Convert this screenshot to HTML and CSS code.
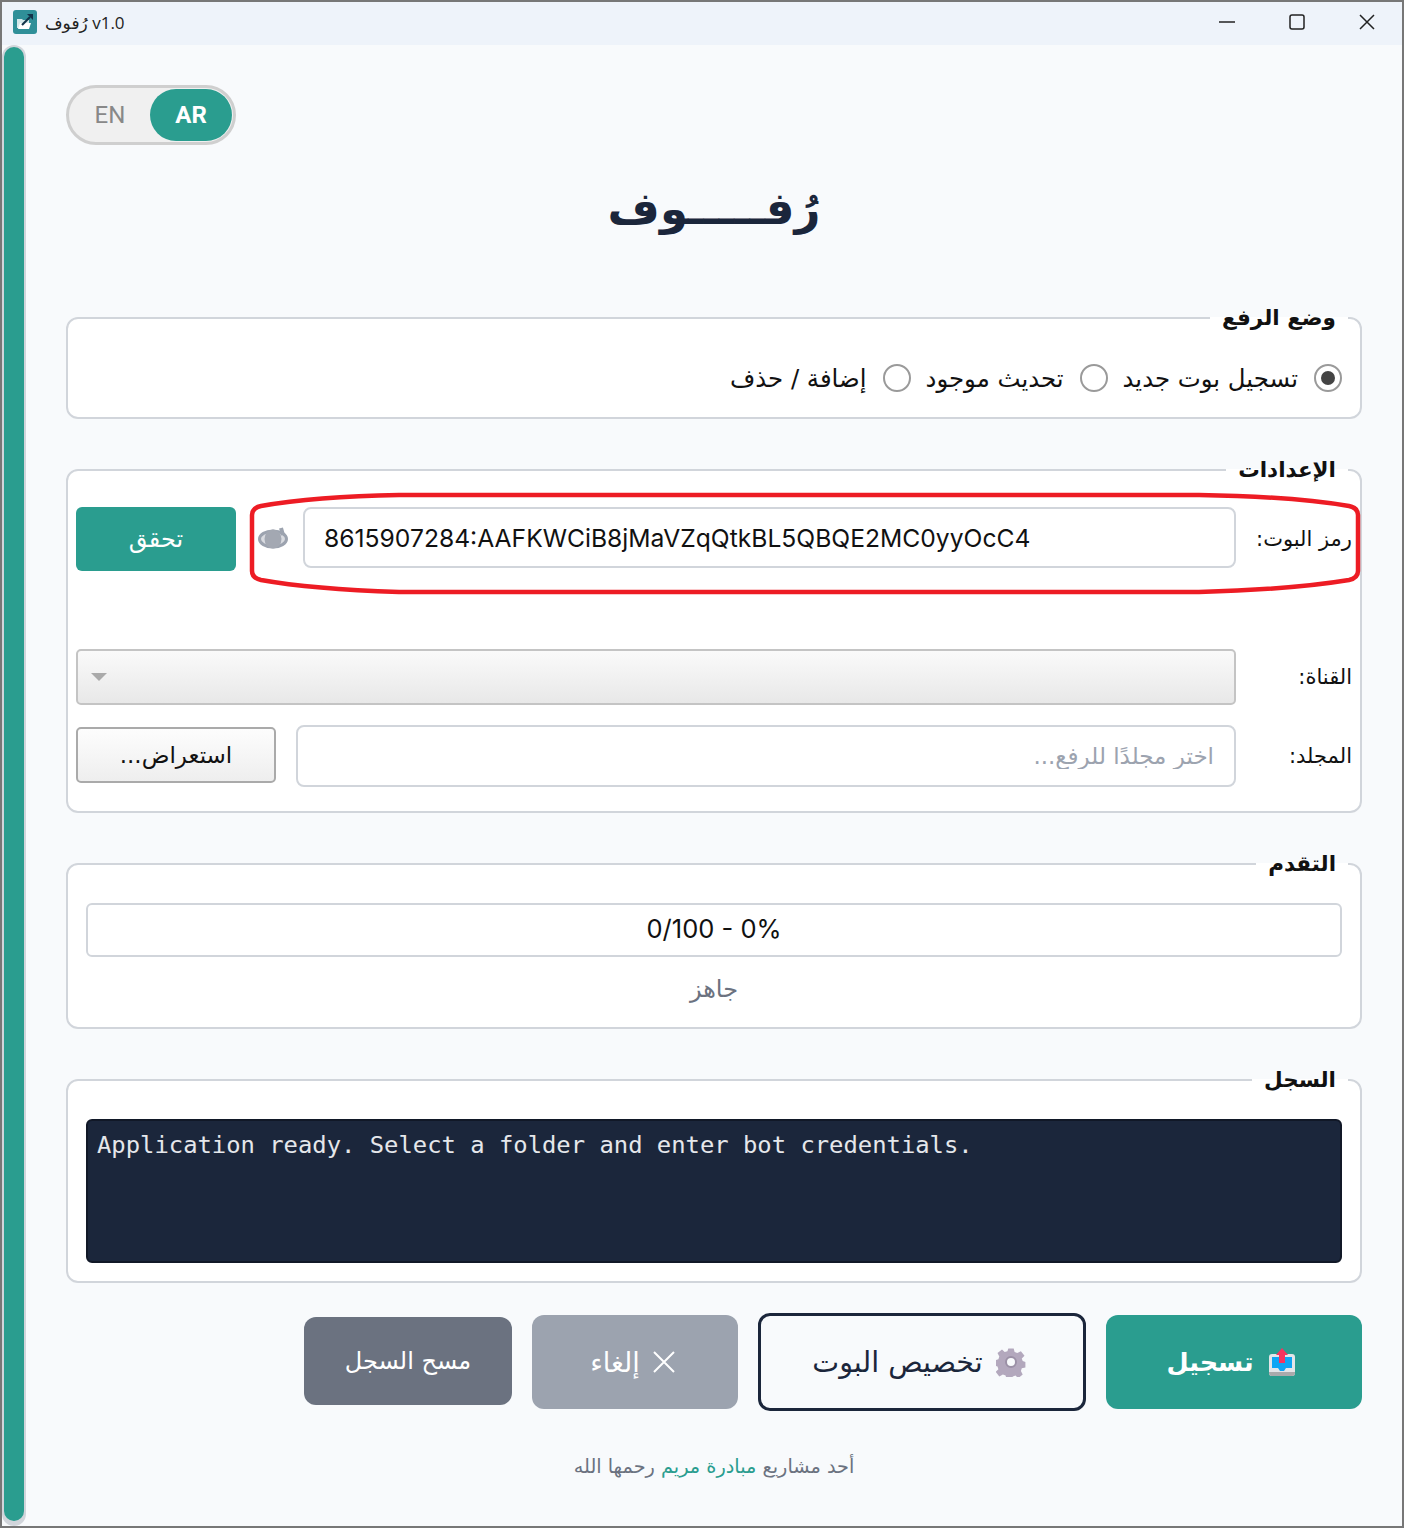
FILE: index.html
```html
<!DOCTYPE html>
<html lang="ar" dir="rtl">
<head>
  <meta charset="UTF-8" />
  <title>رُفوف v1.0</title>
  <link rel="stylesheet" href="styles.css">
</head>
<body>
  <div class="window">
    <div class="titlebar" dir="ltr">
      <svg class="app-icon" viewBox="0 0 24 24" xmlns="http://www.w3.org/2000/svg">
        <rect width="24" height="24" rx="3" fill="#2f8f98"/>
        <path d="M4 9h5l1 1h6v8H4z" fill="#d5e9eb"/>
        <path d="M5 19l2-6h11l-2 6z" fill="#fff"/>
        <path d="M9 15l8-8" stroke="#12344a" stroke-width="2.2"/>
        <path d="M14 4h6v6z" fill="#12344a"/>
      </svg>
      <span class="app-title">رُفوف v1.0</span>
      <div class="win-controls">
        <svg viewBox="0 0 16 16" xmlns="http://www.w3.org/2000/svg"><path d="M0 8h16"/></svg>
        <svg viewBox="0 0 16 16" xmlns="http://www.w3.org/2000/svg"><rect x="1" y="1" width="14" height="14" rx="2"/></svg>
        <svg viewBox="0 0 16 16" xmlns="http://www.w3.org/2000/svg"><path d="M1 1l14 14M15 1L1 15"/></svg>
      </div>
    </div>

    <div class="app-body" dir="ltr">
      <div class="scroll-track"><div class="scroll-thumb"></div></div>

      <main class="content" dir="rtl">
        <div class="lang-row">
          <div class="lang-toggle" dir="ltr">
            <span class="lang-opt">EN</span>
            <span class="lang-opt active">AR</span>
          </div>
        </div>

        <h1 class="app-heading">رُفـــــوف</h1>

        <fieldset class="group group-mode">
          <legend>وضع الرفع</legend>
          <div class="radio-row">
            <label class="radio"><input type="radio" name="mode" checked>تسجيل بوت جديد</label>
            <label class="radio"><input type="radio" name="mode">تحديث موجود</label>
            <label class="radio"><input type="radio" name="mode">إضافة / حذف</label>
          </div>
        </fieldset>

        <fieldset class="group group-settings">
          <legend>الإعدادات</legend>
          <div class="field-row row-token">
            <label class="field-label">رمز البوت:</label>
            <input class="text-input token-input" dir="ltr" type="text" value="8615907284:AAFKWCiB8jMaVZqQtkBL5QBQE2MC0yyOcC4">
            <svg class="eye" viewBox="0 0 30 24" xmlns="http://www.w3.org/2000/svg">
              <ellipse cx="15" cy="13" rx="13.5" ry="8" fill="#d9dbe0" stroke="#9ca3af" stroke-width="3"/>
              <ellipse cx="15" cy="13" rx="8.5" ry="9.5" fill="#a3a8b2"/>
              <path d="M23 2l2 7" stroke="#9ca3af" stroke-width="4"/>
            </svg>
            <button class="btn-verify">تحقق</button>
          </div>
          <div class="field-row row-channel">
            <label class="field-label">القناة:</label>
            <div class="select-box"><span class="caret"></span></div>
          </div>
          <div class="field-row row-folder">
            <label class="field-label">المجلد:</label>
            <input class="text-input folder-input" type="text" placeholder="اختر مجلدًا للرفع...">
            <button class="btn-browse">استعراض...</button>
          </div>
          <svg class="highlight" viewBox="0 0 1112 100" xmlns="http://www.w3.org/2000/svg">
            <path d="M3 22Q3 15 12 13C40 8 90 3 150 2L950 2C1020 3 1070 8 1100 13Q1109 15 1109 22L1109 78Q1109 85 1100 87C1070 92 1020 97 950 99L150 99C90 97 40 92 12 87Q3 85 3 78Z"/>
          </svg>
        </fieldset>

        <fieldset class="group group-progress">
          <legend>التقدم</legend>
          <div class="progress-bar" dir="ltr">0/100 - 0%</div>
          <div class="status">جاهز</div>
        </fieldset>

        <fieldset class="group group-log">
          <legend>السجل</legend>
          <div class="log-box" dir="ltr">Application ready. Select a folder and enter bot credentials.</div>
        </fieldset>

        <div class="actions">
          <button class="btn btn-primary">
            <svg class="btn-icon" viewBox="0 0 26 28" xmlns="http://www.w3.org/2000/svg">
              <rect x="0" y="6" width="26" height="22" rx="3" fill="#e3e5e8"/>
              <path d="M0 24h26v1a3 3 0 0 1-3 3H3a3 3 0 0 1-3-3z" fill="#a9aaac"/>
              <path d="M3 9h20v11h-6l-2 3h-4l-2-3H3z" fill="#0ea5f4"/>
              <path d="M13 0l6 7h-3v8h-6V7H7z" fill="#f6345f"/>
            </svg>
            <span>تسجيل</span>
          </button>
          <button class="btn btn-outline">
            <svg class="btn-icon gear" viewBox="0 0 30 30" xmlns="http://www.w3.org/2000/svg">
              <path d="M12 0h6l1 4 3 1 4-2 4 5-3 3 1 3 3 1v6l-4 1-1 3 2 4-5 4-3-3-3 1-1 3h-6l-1-4-3-1-4 2-4-5 3-3-1-3-3-1v-6l4-1 1-3-2-4 5-4 3 3 3-1z" transform="translate(1.5 1.5) scale(.9)" fill="#b3a8bd"/>
              <circle cx="15" cy="15" r="5" fill="#f8fafc" stroke="#9b90a6" stroke-width="2"/>
            </svg>
            <span>تخصيص البوت</span>
          </button>
          <button class="btn btn-cancel">
            <svg class="btn-icon x-icon" viewBox="0 0 22 22" xmlns="http://www.w3.org/2000/svg"><path d="M1 1l20 20M21 1L1 21"/></svg>
            <span>إلغاء</span>
          </button>
          <button class="btn btn-clear"><span>مسح السجل</span></button>
        </div>

        <p class="footer">أحد مشاريع <a href="#">مبادرة مريم</a> رحمها الله</p>
      </main>
    </div>
  </div>
</body>
</html>
```
FILE: styles.css
```css
* {
  box-sizing: border-box;
}
body {
  margin: 0;
  font-family: Inter, "DejaVu Sans", sans-serif;
  background: #f8fafc;
  color: #111827;
}
.window {
  width: 1404px;
  height: 1528px;
  border: 2px solid #777;
  display: flex;
  flex-direction: column;
  overflow: hidden;
}
.titlebar {
  height: 43px;
  flex: none;
  background: #eef3fa;
  display: flex;
  align-items: center;
  padding: 0 0 3px 11px;
}
.app-icon {
  width: 24px;
  height: 24px;
  margin-right: 8px;
}
.app-title {
  font-family: "Open Sans", "DejaVu Sans", sans-serif;
  font-size: 17px;
  color: #222;
}
.win-controls {
  margin-left: auto;
  display: flex;
  gap: 54px;
  padding-right: 27px;
}
.win-controls svg {
  width: 16px;
  height: 16px;
  fill: none;
  stroke: #222;
  stroke-width: 1.5;
}
.app-body {
  flex: 1;
  display: flex;
  min-height: 0;
}
.scroll-track {
  width: 24px;
  flex: none;
  background: #d1d5db;
  border-radius: 12px;
  padding: 2px 2px 5px;
}
.scroll-thumb {
  height: 100%;
  background: #2a9d8f;
  border-radius: 10px;
}
.content {
  width: 1296px;
  flex: none;
  padding: 40px 0 0;
  margin-left: 40px;
}
.lang-row {
  display: flex;
  justify-content: flex-end;
}
.lang-toggle {
  width: 170px;
  height: 60px;
  border: 3px solid #cfcfcf;
  border-radius: 30px;
  background: #f0f0f0;
  display: flex;
  align-items: center;
  padding: 1px;
}
.lang-opt {
  flex: 1;
  height: 52px;
  display: flex;
  align-items: center;
  justify-content: center;
  font-family: Roboto, sans-serif;
  font-size: 24px;
  color: #888;
  border-radius: 26px;
}
.lang-opt.active {
  flex: none;
  width: 82px;
  background: #2a9d8f;
  color: #fff;
  font-weight: 700;
}
.app-heading {
  margin: 0;
  padding-top: 27px;
  height: 159px;
  text-align: center;
  font-family: "DejaVu Sans", sans-serif;
  font-size: 45px;
  line-height: 74px;
  font-weight: 700;
  color: #1b263b;
}
.group {
  margin: 0;
  background: #fff;
  border: 2px solid #d1d5db;
  border-radius: 12px;
  padding: 0 8px;
  position: relative;
  min-inline-size: 0;
}
.group legend {
  font-family: "DejaVu Sans", sans-serif;
  font-size: 21.5px;
  font-weight: 700;
  line-height: 28px;
  color: #111;
  padding: 0 12px;
  margin-inline-start: 4px;
}
.group-mode {
  height: 115px;
}
.radio-row {
  display: flex;
  gap: 15px;
  padding: 32px 10px 0;
  height: 60px;
  align-items: center;
}
.radio {
  display: flex;
  align-items: center;
  gap: 16px;
  font-family: "DejaVu Sans", sans-serif;
  font-size: 24.4px;
  color: #111;
  white-space: nowrap;
}
.radio input {
  appearance: none;
  margin: 0;
  width: 28px;
  height: 28px;
  border: 2px solid #9a9a9a;
  border-radius: 50%;
  background: #fff;
  display: grid;
  place-items: center;
}
.radio input:checked::before {
  content: "";
  width: 14px;
  height: 14px;
  border-radius: 50%;
  background: #444;
}
.group-settings {
  height: 357px;
  margin-top: 37px;
}
.field-row {
  display: flex;
  align-items: center;
}
.field-label {
  flex: 0 0 116px;
  font-family: "DejaVu Sans", sans-serif;
  font-size: 21px;
  color: #111;
  white-space: nowrap;
}
.text-input {
  flex: 1;
  min-width: 0;
  background: #fff;
  border: 2px solid #d1d5db;
  border-radius: 8px;
  color: #111;
  outline: none;
}
.row-token {
  margin-top: 23px;
  height: 64px;
}
.token-input {
  height: 61px;
  margin-bottom: 3px;
  padding: 0 20px 0 19px;
  font-family: Inter, sans-serif;
  font-size: 24.66px;
}
.eye {
  flex: none;
  width: 30px;
  height: 24px;
  margin: 0 15px 2px 22px;
}
.btn-verify {
  flex: none;
  width: 160px;
  height: 64px;
  border: 0;
  border-radius: 6px;
  background: #2a9d8f;
  color: #fff;
  font-family: "DejaVu Sans", sans-serif;
  font-size: 24px;
}
.row-channel {
  margin-top: 78px;
}
.select-box {
  flex: 1;
  height: 56px;
  border: 2px solid #c4c4c4;
  border-radius: 5px;
  background: linear-gradient(#fafafa, #e8e8e8);
  display: flex;
  align-items: center;
  justify-content: flex-end;
}
.caret {
  width: 0;
  height: 0;
  border-left: 8px solid transparent;
  border-right: 8px solid transparent;
  border-top: 8px solid #aaa;
  margin-left: 13px;
}
.row-folder {
  margin-top: 20px;
}
.folder-input {
  height: 62px;
  padding: 0 20px;
  font-family: "DejaVu Sans", sans-serif;
  font-size: 23px;
}
.folder-input::placeholder {
  color: #9ca3af;
}
.btn-browse {
  flex: none;
  width: 200px;
  height: 56px;
  margin: 0 20px 2px 0;
  border: 2px solid #aaa;
  border-radius: 5px;
  background: linear-gradient(#fdfdfd, #eee);
  color: #111;
  font-family: "DejaVu Sans", sans-serif;
  font-size: 23px;
}
.highlight {
  position: absolute;
  left: 181px;
  top: 9px;
  width: 1112px;
  height: 100px;
  overflow: visible;
  pointer-events: none;
}
.highlight path {
  fill: none;
  stroke: #ed1c24;
  stroke-width: 4.5;
}
.group-progress {
  height: 179px;
  margin-top: 37px;
  padding: 0 18px;
}
.group-progress legend,
.group-log legend {
  margin-inline-start: -6px;
}
.progress-bar {
  margin-top: 25px;
  height: 54px;
  background: #fff;
  border: 2px solid #d1d5db;
  border-radius: 6px;
  display: flex;
  align-items: center;
  justify-content: center;
  padding-bottom: 4px;
  font-size: 25.5px;
  color: #111;
}
.status {
  text-align: center;
  margin-top: 18px;
  font-family: "DejaVu Sans", sans-serif;
  font-size: 24px;
  color: #6b7280;
}
.group-log {
  height: 217px;
  margin-top: 37px;
  padding: 0 18px;
}
.log-box {
  margin-top: 25px;
  height: 144px;
  background: #1b263b;
  border: 2px solid #111827;
  border-radius: 6px;
  padding: 9px 9px;
  font-family: "DejaVu Sans Mono", monospace;
  font-size: 23.85px;
  line-height: 30px;
  color: #e5e7eb;
}
.actions {
  margin-top: 30px;
  height: 98px;
  display: flex;
  align-items: center;
  gap: 20px;
}
.btn {
  display: flex;
  align-items: center;
  justify-content: center;
  gap: 13px;
  border: 0;
  border-radius: 12px;
  padding: 0;
  font-family: "DejaVu Sans", sans-serif;
  color: #fff;
}
.btn-primary {
  width: 256px;
  height: 94px;
  padding-right: 7px;
  gap: 15px;
  background: #2a9d8f;
  font-size: 25.5px;
  font-weight: 700;
}
.btn-outline {
  width: 328px;
  height: 98px;
  padding-right: 6px;
  background: transparent;
  border: 3px solid #1b263b;
  color: #1b263b;
  font-size: 28.5px;
}
.btn-cancel {
  width: 206px;
  height: 94px;
  padding-right: 5px;
  background: #9ca3af;
  font-size: 27px;
}
.btn-clear {
  width: 208px;
  height: 88px;
  margin-bottom: 2px;
  background: #6b7280;
  font-size: 24px;
}
.btn-icon {
  flex: none;
  width: 26px;
  height: 28px;
}
.gear {
  width: 30px;
  height: 30px;
}
.x-icon {
  width: 22px;
  height: 22px;
  fill: none;
  stroke: #fff;
  stroke-width: 2;
}
.footer {
  margin: 44px 0 0;
  text-align: center;
  font-family: "DejaVu Sans", sans-serif;
  font-size: 19.3px;
  color: #6b7280;
}
.footer a {
  color: #2a9d8f;
  text-decoration: none;
}
```
